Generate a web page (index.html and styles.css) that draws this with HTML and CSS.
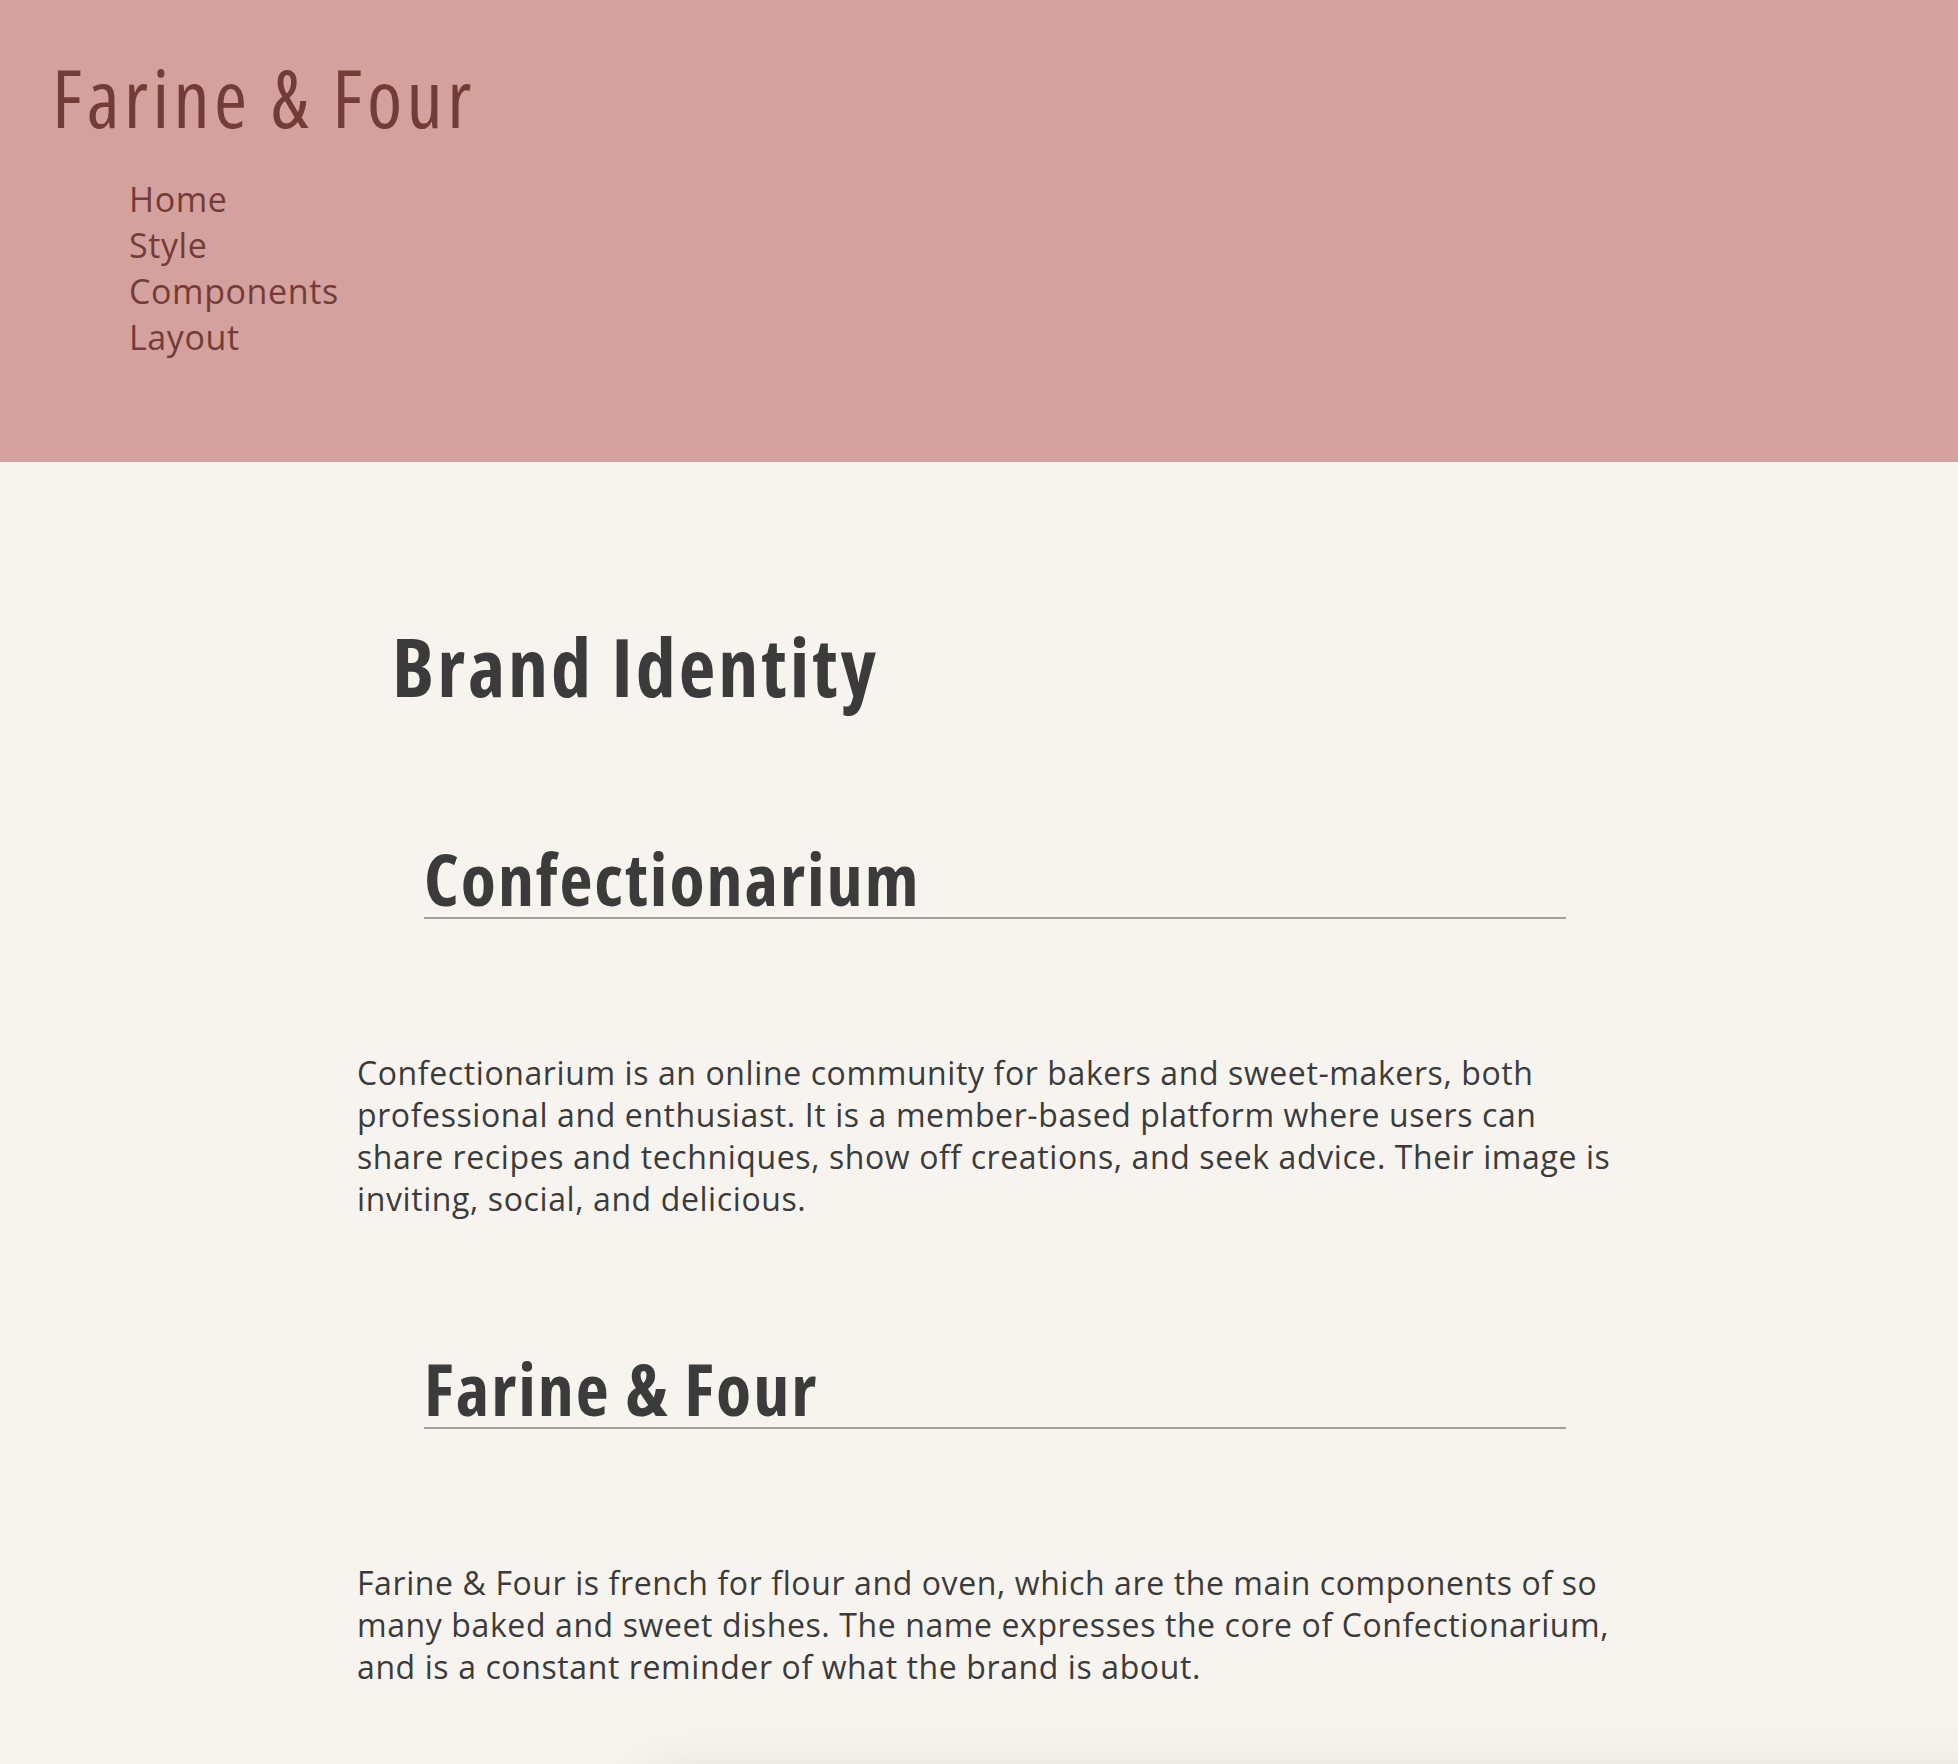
FILE: index.html
```html
<!DOCTYPE html>
<html lang="en">
<head>
<meta charset="utf-8">
<title>Farine &amp; Four — Brand Identity</title>
<link rel="stylesheet" href="styles.css">
</head>
<body>
<header class="site-header">
  <h1 class="logo">Farine &amp; Four</h1>
  <nav class="nav">
    <ul class="nav-list">
      <li><a href="#">Home</a></li>
      <li><a href="#">Style</a></li>
      <li><a href="#">Components</a></li>
      <li><a href="#">Layout</a></li>
    </ul>
  </nav>
</header>
<main class="main">
  <h1 class="page-title">Brand Identity</h1>
  <section class="block">
    <h2 class="block-title">Confectionarium</h2>
    <p class="block-text">Confectionarium is an online community for bakers and sweet-makers, both professional and enthusiast. It is a member-based platform where users can share recipes and techniques, show off creations, and seek advice. Their image is inviting, social, and delicious.</p>
  </section>
  <section class="block">
    <h2 class="block-title">Farine &amp; Four</h2>
    <p class="block-text">Farine &amp; Four is french for flour and oven, which are the main components of so many baked and sweet dishes. The name expresses the core of Confectionarium, and is a constant reminder of what the brand is about.</p>
  </section>
  <div class="card"></div>
</main>
</body>
</html>
```
FILE: styles.css
```css
html, body {
  margin: 0;
  padding: 0;
}
body {
  background: #f7f4f0;
  color: #3b3b3b;
  font-family: "Open Sans", sans-serif;
  overflow: hidden;
}
.site-header {
  background: #d4a19e;
  height: 462px;
  box-sizing: border-box;
  padding: 57px 0 0 52px;
}
.logo {
  margin: 0;
  font-family: "Open Sans", sans-serif;
  font-stretch: 80%;
  font-weight: normal;
  font-size: 80px;
  line-height: 80px;
  letter-spacing: 4.5px;
  color: #743c37;
}
.nav-list {
  list-style: none;
  margin: 39px 0 0 77px;
  padding: 0;
}
.nav-list li {
  font-size: 34px;
  line-height: 46px;
  letter-spacing: 0.6px;
}
.nav-list a {
  color: #743c37;
  text-decoration: none;
}
.main {
  padding: 164px 0 0 357px;
  width: 1274px;
}
.page-title {
  margin: 0 0 0 35px;
  font-family: "Open Sans", sans-serif;
  font-stretch: 80%;
  font-weight: bold;
  font-size: 80px;
  line-height: 80px;
  letter-spacing: 3px;
  color: #3b3b3b;
}
.block {
  margin-top: 136px;
}
.block + .block {
  margin-top: 132px;
}
.block-title {
  margin: 0 0 0 67px;
  width: 1142px;
  padding-bottom: 3px;
  border-bottom: 2px solid #a0a09b;
  font-family: "Open Sans", sans-serif;
  font-stretch: 80%;
  font-weight: bold;
  font-size: 72px;
  line-height: 72px;
  letter-spacing: 2px;
  color: #3b3b3b;
}
.block-text {
  margin: 133px 0 0 0;
  font-size: 32px;
  line-height: 42px;
  letter-spacing: 0.6px;
}
.card {
  margin: 90px 0 0 290px;
  height: 300px;
  width: 1400px;
  background: #f7f4f0;
  box-shadow: 0 0 50px rgba(0, 0, 0, 0.12);
}
```
